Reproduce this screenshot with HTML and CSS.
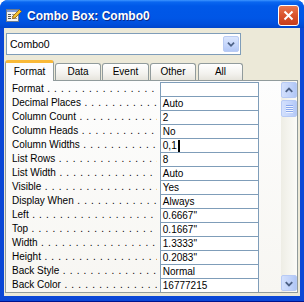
FILE: index.html
```html
<!DOCTYPE html>
<html lang="en">
<head>
  <meta charset="UTF-8">
  <title>Combo Box: Combo0</title>
  <link rel="stylesheet" href="styles.css">
</head>
<body>
  <div class="window">
    <div class="titlebar">
      <svg class="app-icon" width="16" height="16" viewBox="0 0 16 16">
        <rect x="0.5" y="2.5" width="12" height="12" fill="#f4f4f0" stroke="#6d7b8f"/>
        <rect x="1" y="3" width="11" height="2" fill="#7b9bd8"/>
        <rect x="2" y="7" width="3" height="1" fill="#555"/>
        <rect x="6" y="7" width="5" height="1" fill="#999"/>
        <rect x="2" y="9" width="3" height="1" fill="#555"/>
        <rect x="6" y="9" width="5" height="1" fill="#999"/>
        <rect x="2" y="11" width="3" height="1" fill="#555"/>
        <rect x="6" y="11" width="5" height="1" fill="#999"/>
        <path d="M7 9 L13.5 2.5 L15.5 4.5 L9 11 L6.5 11.5 Z" fill="#f2c230" stroke="#8a5a10" stroke-width="0.8"/>
      </svg>
      <span class="title">Combo Box: Combo0</span>
      <button class="close-btn">
        <svg width="11" height="11" viewBox="0 0 11 11">
          <path d="M1.5 1.5 L9.5 9.5 M9.5 1.5 L1.5 9.5" stroke="#fff" stroke-width="2"/>
        </svg>
      </button>
    </div>

    <div class="client">
      <div class="combo">
        <span class="combo-text">Combo0</span>
        <span class="combo-btn">
          <svg width="16" height="16" viewBox="0 0 16 16">
            <path d="M4.5 6.5 L8 10 L11.5 6.5" fill="none" stroke="#4d6185" stroke-width="2"/>
          </svg>
        </span>
      </div>

      <div class="tabs">
        <div class="tab active">Format</div>
        <div class="tab">Data</div>
        <div class="tab">Event</div>
        <div class="tab">Other</div>
        <div class="tab">All</div>
      </div>

      <div class="panel">
        <div class="sheet">
          <div class="row"><div class="label">Format</div><div class="value"></div></div>
          <div class="row"><div class="label">Decimal Places</div><div class="value">Auto</div></div>
          <div class="row"><div class="label">Column Count</div><div class="value">2</div></div>
          <div class="row"><div class="label">Column Heads</div><div class="value">No</div></div>
          <div class="row"><div class="label">Column Widths</div><div class="value">0,1<span class="caret"></span></div></div>
          <div class="row"><div class="label">List Rows</div><div class="value">8</div></div>
          <div class="row"><div class="label">List Width</div><div class="value">Auto</div></div>
          <div class="row"><div class="label">Visible</div><div class="value">Yes</div></div>
          <div class="row"><div class="label">Display When</div><div class="value">Always</div></div>
          <div class="row"><div class="label">Left</div><div class="value">0.6667"</div></div>
          <div class="row"><div class="label">Top</div><div class="value">0.1667"</div></div>
          <div class="row"><div class="label">Width</div><div class="value">1.3333"</div></div>
          <div class="row"><div class="label">Height</div><div class="value">0.2083"</div></div>
          <div class="row"><div class="label">Back Style</div><div class="value">Normal</div></div>
          <div class="row"><div class="label">Back Color</div><div class="value">16777215</div></div>
        </div>

        <div class="scrollbar">
          <div class="sb-btn">
            <svg width="15" height="15" viewBox="0 0 15 15">
              <path d="M4 9 L7.5 5.5 L11 9" fill="none" stroke="#4d6185" stroke-width="2"/>
            </svg>
          </div>
          <div class="sb-thumb">
            <span></span><span></span><span></span><span></span>
          </div>
          <div class="sb-track"></div>
          <div class="sb-btn">
            <svg width="15" height="15" viewBox="0 0 15 15">
              <path d="M4 6 L7.5 9.5 L11 6" fill="none" stroke="#4d6185" stroke-width="2"/>
            </svg>
          </div>
        </div>
      </div>
    </div>
  </div>
</body>
</html>
```

FILE: styles.css
```css
/* General */
body {
  margin: 0;
  background-color: #ffffff;
  font-family: "Liberation Sans", Arial, sans-serif;
  font-size: 10px;
  color: #000;
}

.window {
  width: 304px;
  height: 302px;
  background-color: #0a47d6;
  border-radius: 8px 8px 0 0;
  overflow: hidden;
  box-sizing: border-box;
  border-bottom: 1px solid #00138c;
}

/* Title bar */
.titlebar {
  height: 28px;
  display: flex;
  align-items: center;
  padding: 0 6px;
  background: linear-gradient(to bottom, #3d95ff 0, #0a66f0 2px, #0058e8 6px, #0056e6 18px, #004fdc 24px, #0046cc 28px);
}

.app-icon {
  margin-top: 2px;
  flex-shrink: 0;
}

.title {
  margin-left: 5px;
  margin-top: 4px;
  color: white;
  font-size: 12px;
  font-weight: bold;
  text-shadow: 1px 1px 0 #0a2a8a;
}

.close-btn {
  margin-left: auto;
  margin-right: -1px;
  margin-top: 3px;
  width: 21px;
  height: 21px;
  padding: 0;
  border: 1px solid #fff;
  border-radius: 3px;
  background: linear-gradient(to bottom, #e8764f, #d9532c 50%, #c63d1c);
  display: flex;
  align-items: center;
  justify-content: center;
}

/* Client area */
.client {
  margin: 0 4px;
  height: 268px;
  background-color: #ece9d8;
  padding: 5px 0 0 1px;
  box-sizing: border-box;
}

.combo {
  width: 235px;
  height: 22px;
  margin-left: 1px;
  box-sizing: border-box;
  border: 1px solid #7f9db9;
  background-color: white;
  display: flex;
  align-items: center;
  padding-left: 3px;
}

.combo-text {
  font-size: 10.5px;
}

.combo-btn {
  margin-left: auto;
  margin-right: 1px;
  width: 16px;
  height: 16px;
  border: 1px solid #b9cbf3;
  border-radius: 2px;
  box-sizing: border-box;
  background: linear-gradient(to bottom, #dbe6fd, #c4d5fb 60%, #b3c8f6);
  display: flex;
  align-items: center;
  justify-content: center;
}

/* Tabs */
.tabs {
  display: flex;
  align-items: flex-end;
  height: 20px;
  margin-top: 5px;
}

.tab {
  height: 16px;
  box-sizing: content-box;
  border: 1px solid #919b9c;
  border-bottom: none;
  border-radius: 3px 3px 0 0;
  background: linear-gradient(to bottom, #ffffff, #f3f2ee 60%, #e6e4dc);
  text-align: center;
  line-height: 16px;
  margin-right: 1px;
  width: 44px;
}

.tab:nth-child(3) { width: 45px; }
.tab:nth-child(4) { width: 44px; }
.tab:nth-child(5) { width: 43px; margin-left: 1px; }

.tab.active {
  width: 47px;
  height: 18px;
  line-height: 18px;
  border-top: 3px solid #f9b938;
  background: #fcfcfe;
  margin-bottom: -1px;
  position: relative;
  z-index: 1;
}

/* Property sheet panel */
.panel {
  width: 293px;
  height: 213px;
  box-sizing: border-box;
  border: 1px solid #919b9c;
  background: linear-gradient(to bottom, #fdfdfd, #f7f6f2);
  display: flex;
  overflow: hidden;
}

.sheet {
  padding-top: 1px;
  width: 253px;
}

.row {
  display: flex;
  height: 14px;
}

.label {
  width: 146px;
  padding-left: 6px;
  margin-right: 3px;
  white-space: nowrap;
  overflow: hidden;
  line-height: 14px;
}

.label::after {
  content: " . . . . . . . . . . . . . . . . . . . . . . . . . . . . .";
  letter-spacing: 0.7px;
}

.value {
  width: 96px;
  height: 13px;
  border: 1px solid #7f9db9;
  border-bottom: none;
  background-color: white;
  padding-left: 2px;
  line-height: 13px;
  white-space: nowrap;
  display: flex;
  align-items: center;
}

.caret {
  display: inline-block;
  width: 2px;
  height: 12px;
  margin-left: 1px;
  background-color: black;
}

/* Scrollbar */
.scrollbar {
  margin-left: auto;
  width: 16px;
  padding-top: 1px;
  display: flex;
  flex-direction: column;
  background: linear-gradient(to right, #eeede5, #fbfbf8);
}

.sb-btn {
  height: 16px;
  box-sizing: border-box;
  border: 1px solid #b7caf5;
  border-radius: 2px;
  background: linear-gradient(to right, #d3e0fc, #c0d2fa 60%, #b0c6f5);
  display: flex;
  align-items: center;
  justify-content: center;
}

.sb-thumb {
  margin-top: 2px;
  height: 17px;
  box-sizing: border-box;
  border: 1px solid #b7caf5;
  border-radius: 2px;
  background: linear-gradient(to right, #d3e0fc, #c3d4fb 60%, #b3c8f6);
  display: flex;
  flex-direction: column;
  align-items: center;
  justify-content: center;
  gap: 1px;
}

.sb-thumb span {
  width: 7px;
  height: 1px;
  background-color: #8aa8ec;
  box-shadow: 0 1px 0 #eef3fe;
}

.sb-track {
  flex: 1;
}

.scrollbar .sb-btn:last-child {
  margin-bottom: 1px;
}
```
